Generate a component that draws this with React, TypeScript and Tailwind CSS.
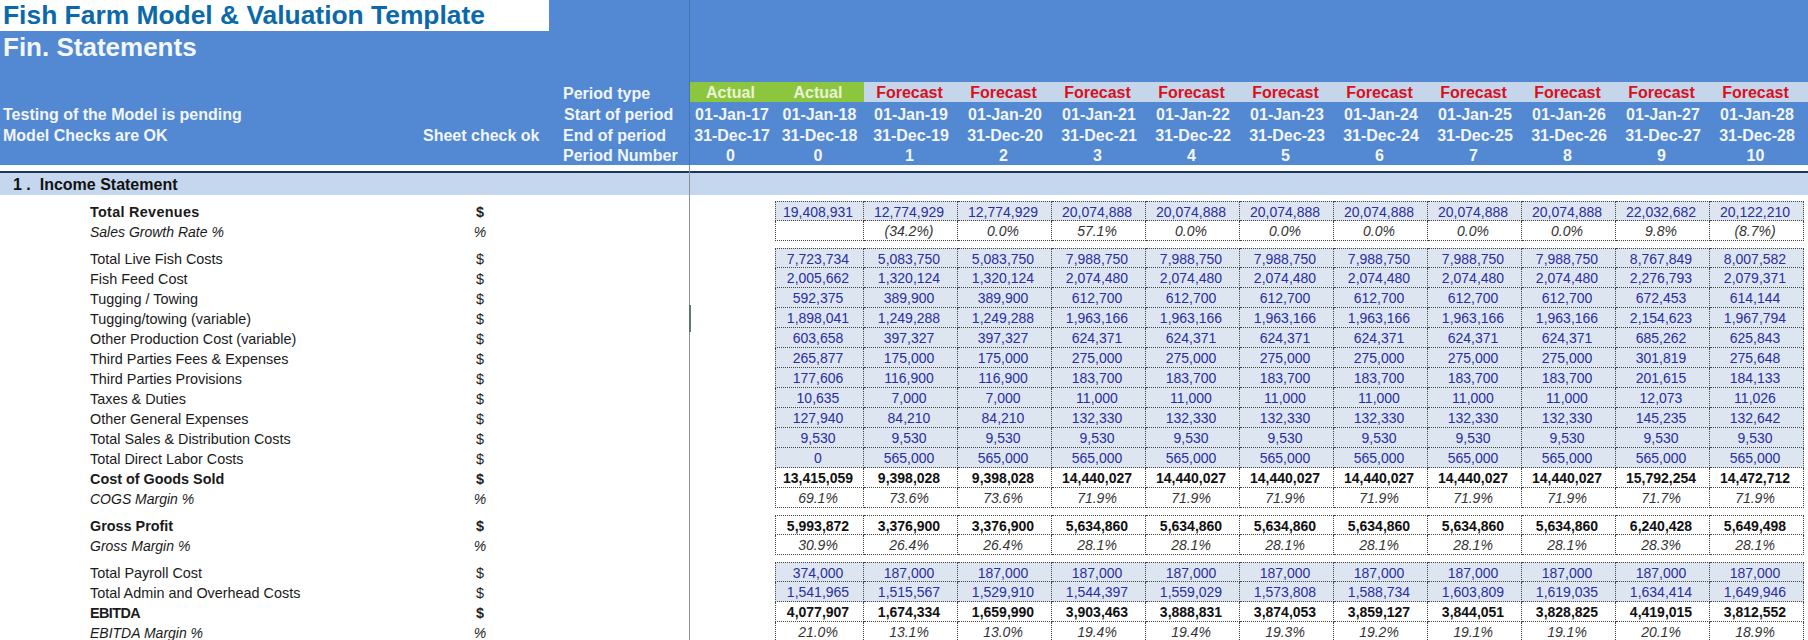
const F = "font-['Liberation_Sans',Arial,sans-serif]";

const rep = (v: string, n: number) => Array<string>(n).fill(v);

type Kind = "input" | "pct" | "total";
interface RowData { label: string; unit: string; kind: Kind; labelClass: string; track?: string; values: string[] }

const plain = "font-normal text-[14.4px]";
const bold = "font-bold text-[14.4px]";
const ital = "italic text-[14px]";

const groups: RowData[][] = [
  [
    { label: "Total Revenues", unit: "$", kind: "input", labelClass: bold, track: "tracking-[0.3px]", values: ["19,408,931", "12,774,929", "12,774,929", ...rep("20,074,888", 6), "22,032,682", "20,122,210"] },
    { label: "Sales Growth Rate %", unit: "%", kind: "pct", labelClass: ital, values: ["", "(34.2%)", "0.0%", "57.1%", ...rep("0.0%", 5), "9.8%", "(8.7%)"] },
  ],
  [
    { label: "Total Live Fish Costs", unit: "$", kind: "input", labelClass: plain, values: ["7,723,734", "5,083,750", "5,083,750", ...rep("7,988,750", 6), "8,767,849", "8,007,582"] },
    { label: "Fish Feed Cost", unit: "$", kind: "input", labelClass: plain, values: ["2,005,662", "1,320,124", "1,320,124", ...rep("2,074,480", 6), "2,276,793", "2,079,371"] },
    { label: "Tugging / Towing", unit: "$", kind: "input", labelClass: plain, values: ["592,375", "389,900", "389,900", ...rep("612,700", 6), "672,453", "614,144"] },
    { label: "Tugging/towing (variable)", unit: "$", kind: "input", labelClass: plain, values: ["1,898,041", "1,249,288", "1,249,288", ...rep("1,963,166", 6), "2,154,623", "1,967,794"] },
    { label: "Other Production Cost (variable)", unit: "$", kind: "input", labelClass: plain, values: ["603,658", "397,327", "397,327", ...rep("624,371", 6), "685,262", "625,843"] },
    { label: "Third Parties Fees & Expenses", unit: "$", kind: "input", labelClass: plain, values: ["265,877", "175,000", "175,000", ...rep("275,000", 6), "301,819", "275,648"] },
    { label: "Third Parties Provisions", unit: "$", kind: "input", labelClass: plain, values: ["177,606", "116,900", "116,900", ...rep("183,700", 6), "201,615", "184,133"] },
    { label: "Taxes & Duties", unit: "$", kind: "input", labelClass: plain, values: ["10,635", "7,000", "7,000", ...rep("11,000", 6), "12,073", "11,026"] },
    { label: "Other General Expenses", unit: "$", kind: "input", labelClass: plain, values: ["127,940", "84,210", "84,210", ...rep("132,330", 6), "145,235", "132,642"] },
    { label: "Total Sales & Distribution Costs", unit: "$", kind: "input", labelClass: plain, values: rep("9,530", 11) },
    { label: "Total Direct Labor Costs", unit: "$", kind: "input", labelClass: plain, values: ["0", ...rep("565,000", 10)] },
    { label: "Cost of Goods Sold", unit: "$", kind: "total", labelClass: bold, values: ["13,415,059", "9,398,028", "9,398,028", ...rep("14,440,027", 6), "15,792,254", "14,472,712"] },
    { label: "COGS Margin %", unit: "%", kind: "pct", labelClass: ital, values: ["69.1%", "73.6%", "73.6%", ...rep("71.9%", 6), "71.7%", "71.9%"] },
  ],
  [
    { label: "Gross Profit", unit: "$", kind: "total", labelClass: bold, values: ["5,993,872", "3,376,900", "3,376,900", ...rep("5,634,860", 6), "6,240,428", "5,649,498"] },
    { label: "Gross Margin %", unit: "%", kind: "pct", labelClass: ital, values: ["30.9%", "26.4%", "26.4%", ...rep("28.1%", 6), "28.3%", "28.1%"] },
  ],
  [
    { label: "Total Payroll Cost", unit: "$", kind: "input", labelClass: plain, values: ["374,000", ...rep("187,000", 10)] },
    { label: "Total Admin and Overhead Costs", unit: "$", kind: "input", labelClass: plain, values: ["1,541,965", "1,515,567", "1,529,910", "1,544,397", "1,559,029", "1,573,808", "1,588,734", "1,603,809", "1,619,035", "1,634,414", "1,649,946"] },
    { label: "EBITDA", unit: "$", kind: "total", labelClass: bold, track: "tracking-[-0.6px]", values: ["4,077,907", "1,674,334", "1,659,990", "3,903,463", "3,888,831", "3,874,053", "3,859,127", "3,844,051", "3,828,825", "4,419,015", "3,812,552"] },
    { label: "EBITDA Margin %", unit: "%", kind: "pct", labelClass: ital, values: ["21.0%", "13.1%", "13.0%", "19.4%", "19.4%", "19.3%", "19.2%", "19.1%", "19.1%", "20.1%", "18.9%"] },
  ],
];

const kindClass: Record<Kind, string> = {
  input: "bg-[#dde5f1] text-[#2a2f9e]",
  pct: "bg-white text-[#333333] italic",
  total: "bg-white text-[#111111] font-bold",
};

function Row({ row, first }: { row: RowData; first: boolean }) {
  return (
    <div className="flex h-[20px]">
      <div className={`w-[470px] pl-[90px] leading-[23px] text-[#1a1a1a] ${row.labelClass} ${row.track ?? ""}`}>{row.label}</div>
      <div className={`w-[20px] text-center leading-[23px] text-[#222222] ${row.labelClass}`}>{row.unit}</div>
      <div className="w-[285px]" />
      {row.values.map((v, i) => (
        <div
          key={i}
          className={`${i === 0 ? "w-[89px] border-l" : "w-[94px]"} ${first ? "border-t" : ""} border-r border-b border-dotted border-[#444444] pr-[3px] text-center text-[14px] leading-[20px] ${kindClass[row.kind]}`}
        >
          {v}
        </div>
      ))}
    </div>
  );
}

const periodTypes = ["Actual", "Actual", ...rep("Forecast", 10)];
const years = ["17", "18", "19", "20", "21", "22", "23", "24", "25", "26", "27", "28"];
const numbers = ["0", "0", "1", "2", "3", "4", "5", "6", "7", "8", "9", "10"];
const colW = (i: number) => (i === 0 ? "w-[86px]" : i === 1 ? "w-[89px]" : "w-[94px]");

function HeaderRow({ a, b, label, labelClass, h, children }: { a?: string; b?: string; label: string; labelClass?: string; h: string; children: React.ReactNode }) {
  return (
    <div className={`flex items-center ${h}`}>
      <div className="w-[423px] pl-[3px]">{a}</div>
      <div className="w-[140px]">{b}</div>
      <div className={`w-[126px] ${labelClass ?? ""}`}>{label}</div>
      {children}
    </div>
  );
}

export default function App() {
  return (
    <div className={`${F} relative h-[640px] w-[1808px] overflow-hidden bg-white`}>
      <header className="h-[165px] bg-[#5289d2] text-[16px] font-bold leading-[20px] text-[#f2f5fa]">
        <div className="h-[31px] w-[549px] whitespace-nowrap bg-white pl-[3px] text-[26.4px] leading-[30px] text-[#0b69ab]">Fish Farm Model &amp; Valuation Template</div>
        <div className="h-[51px] pl-[3px] pt-[1px] text-[26px] leading-[30px] text-[#f4f7fb]">Fin. Statements</div>
        <HeaderRow label="Period type" labelClass="pt-[4px]" h="h-[20px]">
          {periodTypes.map((p, i) => (
            <div key={i} className={`${colW(i)} h-[20px] pr-[3px] text-center leading-[22px] ${p === "Actual" ? "bg-[#8cc63f] text-[#e9f3d2]" : "bg-[#c5d5ea] text-[#d8101c]"}`}>{p}</div>
          ))}
          <div className="h-[20px] flex-1 bg-[#c5d5ea]" />
        </HeaderRow>
        <HeaderRow a="Testing of the Model is pending" label="Start of period" labelClass="pl-[1px]" h="h-[21px] pt-[4px]">
          {years.map((y, i) => (
            <div key={i} className={`${colW(i)} text-center`}>01-Jan-{y}</div>
          ))}
        </HeaderRow>
        <HeaderRow a="Model Checks are OK" b="Sheet check ok" label="End of period" h="h-[21px] pt-[4px]">
          {years.map((y, i) => (
            <div key={i} className={`${colW(i)} text-center`}>31-Dec-{y}</div>
          ))}
        </HeaderRow>
        <HeaderRow label="Period Number" h="h-[21px] pt-[2px]">
          {numbers.map((n, i) => (
            <div key={i} className={`${colW(i)} pr-[3px] text-center`}>{n}</div>
          ))}
        </HeaderRow>
      </header>

      <div className="mt-[6px] h-[2px] bg-[#1c3557]" />
      <div className="h-[22px] whitespace-pre bg-[#c5d7ee] pl-[13px] text-[16px] font-bold leading-[23px] text-[#111111]">1 .  Income Statement</div>

      <div className="mt-[6px] flex flex-col gap-[7px]">
        {groups.map((g, gi) => (
          <div key={gi}>
            {g.map((row, ri) => (
              <Row key={row.label} row={row} first={ri === 0} />
            ))}
          </div>
        ))}
      </div>

      <div className="absolute bottom-0 left-[689px] top-0 w-px bg-[#8a9097]" />
      <div className="absolute left-[689px] top-0 h-[165px] w-px bg-[#4273b5]" />
      <div className="absolute left-[689px] top-[305px] h-[27px] w-[2px] bg-[#5b7a72]" />
    </div>
  );
}
